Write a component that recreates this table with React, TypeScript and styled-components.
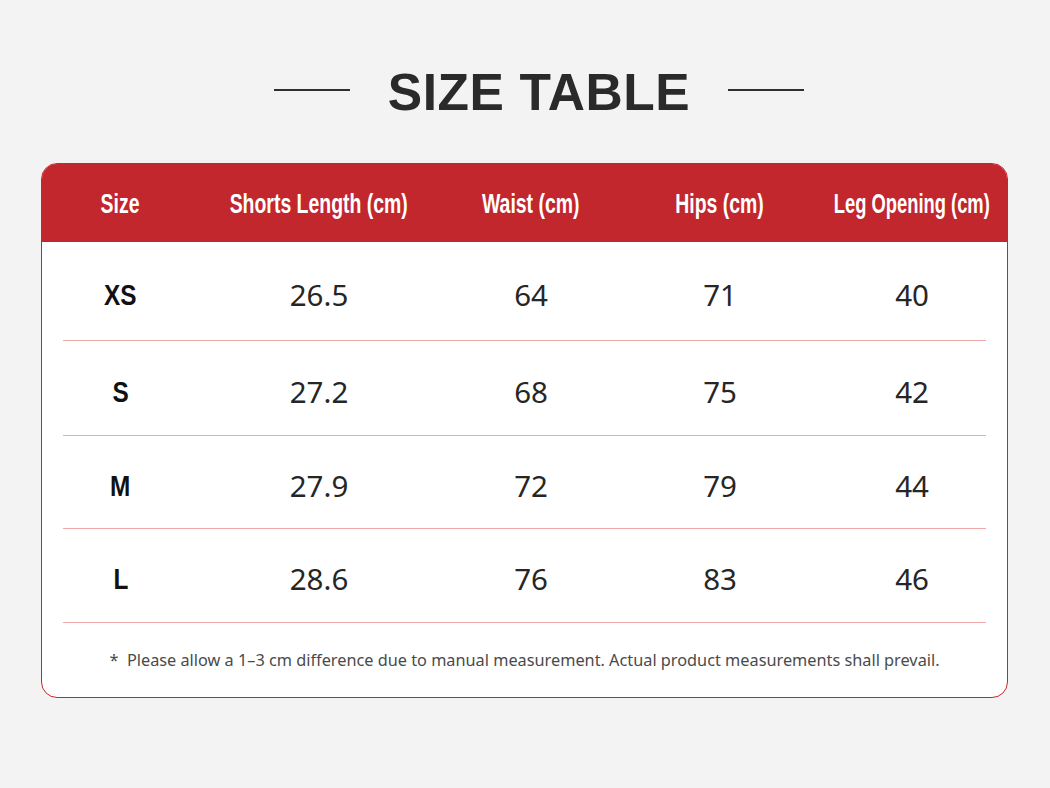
import React from "react";
import styled, { createGlobalStyle } from "styled-components";

const GlobalStyle = createGlobalStyle`
  html, body { margin: 0; padding: 0; background: #f3f3f3; }
  body { font-family: "Noto Sans", "Open Sans", sans-serif; }
`;

const Page = styled.div`
  width: 1050px;
  height: 788px;
  box-sizing: border-box;
  padding: 64px 41px 0 41px;
  display: flex;
  flex-direction: column;
  align-items: stretch;
`;

const TitleRow = styled.div`
  display: flex;
  align-items: center;
  justify-content: center;
  gap: 38px;
  height: 56px;
  margin-left: 28px;
`;

const TitleLine = styled.span`
  display: block;
  width: 76px;
  height: 2px;
  background: #2f2f2f;
  margin-top: -4px;
`;

const Title = styled.h1`
  margin: 0;
  font-family: "Liberation Sans", Arial, sans-serif;
  font-weight: 700;
  font-size: 51.5px;
  letter-spacing: 0.6px;
  color: #2a2a2a;
  line-height: 56px;
`;

const Card = styled.div`
  margin-top: 43px;
  width: 967px;
  height: 535px;
  box-sizing: border-box;
  border: 1.5px solid #c8262c;
  border-radius: 16px;
  background: #ffffff;
  overflow: hidden;
  display: flex;
  flex-direction: column;
`;

const COLS = "157px 240px 184px 194px 1fr";

const HeaderRow = styled.div`
  display: grid;
  grid-template-columns: ${COLS};
  height: 78px;
  flex: none;
  background: #c1272d;
  align-items: center;
`;

const Condensed = styled.span<{ $scale: number }>`
  display: inline-block;
  flex: none;
  white-space: nowrap;
  font-family: "Liberation Sans", Arial, sans-serif;
  font-weight: 700;
  transform: scaleX(${(p) => p.$scale});
  transform-origin: center;
`;

const HeadCell = styled.div<{ $scale?: number }>`
  display: flex;
  justify-content: center;
  min-width: 0;
  color: #ffffff;
  font-size: 27px;
  padding-top: 3px;
`;

const Row = styled.div<{ $h: number }>`
  display: grid;
  grid-template-columns: ${COLS};
  height: ${(p) => p.$h}px;
  flex: none;
  align-items: center;
`;

const Divider = styled.hr`
  margin: 0 21px;
  border: none;
  height: 1px;
  background: #f0a9ab;
  flex: none;
`;

const SizeCell = styled.div`
  display: flex;
  justify-content: center;
  font-size: 29px;
  color: #111111;
  padding-top: 8px;
`;

const ValueCell = styled.div`
  text-align: center;
  font-family: "Noto Sans", "Open Sans", sans-serif;
  font-weight: 400;
  font-size: 29.5px;
  color: #262626;
  padding-top: 6px;
`;

const Note = styled.p`
  margin: 0;
  padding-top: 26px;
  text-align: center;
  font-family: "Noto Sans", "Open Sans", sans-serif;
  font-size: 16.3px;
  color: #4a4a4a;
`;

const headers: [string, number][] = [
  ["Size", 0.72],
  ["Shorts Length (cm)", 0.72],
  ["Waist (cm)", 0.72],
  ["Hips (cm)", 0.72],
  ["Leg Opening (cm)", 0.68],
];
const rows: [string, string, string, string, string][] = [
  ["XS", "26.5", "64", "71", "40"],
  ["S", "27.2", "68", "75", "42"],
  ["M", "27.9", "72", "79", "44"],
  ["L", "28.6", "76", "83", "46"],
];
const heights = [98, 94, 92, 93];

export default function App() {
  return (
    <>
      <GlobalStyle />
      <Page>
        <TitleRow>
          <TitleLine />
          <Title>SIZE TABLE</Title>
          <TitleLine />
        </TitleRow>
        <Card>
          <HeaderRow>
            {headers.map(([h, s]) => (
              <HeadCell key={h}>
                <Condensed $scale={s}>{h}</Condensed>
              </HeadCell>
            ))}
          </HeaderRow>
          {rows.map((r, i) => (
            <React.Fragment key={r[0]}>
              <Row $h={heights[i]}>
                <SizeCell>
                  <Condensed $scale={0.84}>{r[0]}</Condensed>
                </SizeCell>
                {r.slice(1).map((v, j) => (
                  <ValueCell key={j}>{v}</ValueCell>
                ))}
              </Row>
              <Divider />
            </React.Fragment>
          ))}
          <Note>*&nbsp; Please allow a 1–3 cm difference due to manual measurement. Actual product measurements shall prevail.</Note>
        </Card>
      </Page>
    </>
  );
}
